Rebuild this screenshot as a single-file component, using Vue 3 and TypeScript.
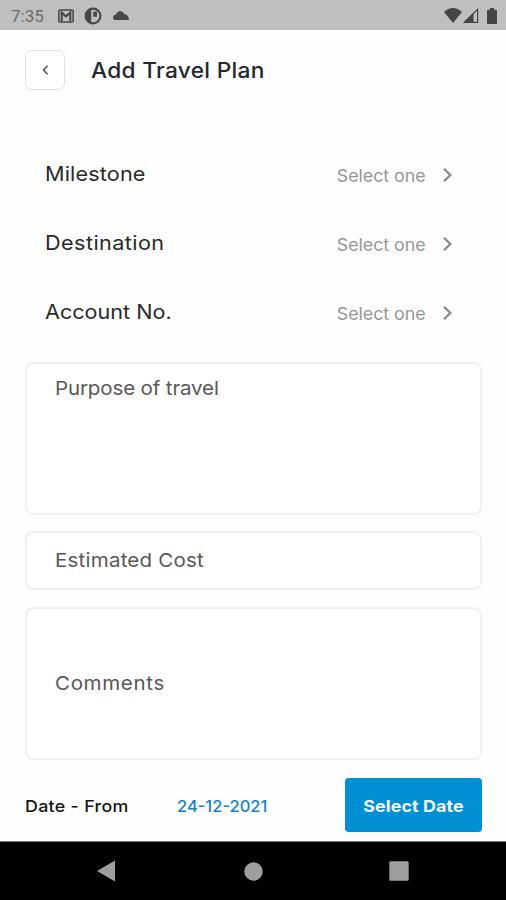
<script setup lang="ts">
interface SelectRow {
  key: string
  label: string
}

const rows: SelectRow[] = [
  { key: 'milestone', label: 'Milestone' },
  { key: 'destination', label: 'Destination' },
  { key: 'account', label: 'Account No.' },
]
</script>

<template>
  <div class="screen">
    <header class="status">
      <span class="clock">7:35</span>
      <svg class="mail" width="16" height="14" viewBox="0 0 16 14">
        <rect x="0.9" y="0.9" width="14.2" height="12" rx="1" fill="none" stroke="#474747" stroke-width="1.5" />
        <path d="M3.7 12V3.6L8 7.3l4.3-3.7V12" fill="none" stroke="#474747" stroke-width="2.1" />
      </svg>
      <svg class="disc" width="18" height="18" viewBox="0 0 18 18">
        <circle cx="9" cy="9" r="7.4" fill="none" stroke="#474747" stroke-width="2.1" />
        <path d="M2 6Q4 2 7.2 1.5V16.5Q3.5 15.5 2 11z" fill="#474747" />
        <path d="M9.2 4.6H13V9.8H9.2z" fill="#474747" />
      </svg>
      <svg class="cloud" width="17" height="10" viewBox="0 0 17 10">
        <path d="M2.6 10A2.7 2.7 0 0 1 2.7 5Q4.1 4.7 4.7 2.9A4.3 4.3 0 0 1 12.1 4Q16.6 4.6 17 10z" fill="#474747" />
      </svg>
      <div class="signals">
        <svg width="18" height="15" viewBox="0 0 18 15">
          <path d="M9 15L0 4Q9-3.8 18 4z" fill="#454545" />
        </svg>
        <svg class="cell" width="16" height="15" viewBox="0 0 16 15">
          <path d="M1.6 14.3L14.6 1.4V14.3z" fill="none" stroke="#454545" stroke-width="1.2" />
          <path d="M0 15L10.5 4.5V15z" fill="#454545" />
        </svg>
        <svg class="battery" width="10" height="16" viewBox="0 0 10 16">
          <path d="M3 0h4v1.7h2q1 0 1 1V15q0 1-1 1H1q-1 0-1-1V2.7q0-1 1-1h2z" fill="#454545" />
        </svg>
      </div>
    </header>

    <main class="content">
      <div class="heading">
        <button class="back" type="button" aria-label="Back">
          <svg width="8" height="12" viewBox="0 0 8 12">
            <path d="M6.7 1.8L2.4 6l4.3 4.2" fill="none" stroke="#4c4c4c" stroke-width="1.4" />
          </svg>
        </button>
        <h1 class="title">Add Travel Plan</h1>
      </div>

      <div class="rows">
        <div v-for="row in rows" :key="row.key" class="row">
          <span class="label" :class="row.key">{{ row.label }}</span>
          <span class="choice">Select one</span>
          <svg class="chevron" width="11" height="16" viewBox="0 0 11 16">
            <path d="M2 1.8L8.3 8L2 14.2" fill="none" stroke="#8a8a8a" stroke-width="2.3" />
          </svg>
        </div>
      </div>

      <div class="field purpose"><span>Purpose of travel</span></div>
      <div class="field cost"><span>Estimated Cost</span></div>
      <div class="field comments"><span>Comments</span></div>

      <div class="dates">
        <span class="from">Date - From</span>
        <span class="date">24-12-2021</span>
        <button class="select" type="button"><span>Select Date</span></button>
      </div>
    </main>

    <nav class="navbar">
      <svg width="18" height="22" viewBox="0 0 18 22"><path d="M0 11L18 0.5v21z" fill="#9e9e9e" /></svg>
      <svg class="home" width="19" height="19" viewBox="0 0 19 19"><circle cx="9.5" cy="9.5" r="9.2" fill="#9e9e9e" /></svg>
      <svg width="20" height="20" viewBox="0 0 20 20"><rect x="0.3" y="0.3" width="19.4" height="19.4" rx="1.5" fill="#9e9e9e" /></svg>
    </nav>
  </div>
</template>

<style>
body {
  background: #fff;
}
</style>

<style scoped>
.screen {
  box-sizing: border-box;
  width: 506px;
  height: 900px;
  display: flex;
  flex-direction: column;
  background: #fefefe;
  font-family: Inter, "Liberation Sans", sans-serif;
  overflow: hidden;
}
.screen * {
  box-sizing: border-box;
}
svg {
  display: block;
  flex: none;
}
span {
  white-space: nowrap;
}
/* Widens the letterforms of the interface face */
.title,
.label,
.field span,
.from {
  transform: scaleX(1.08);
  transform-origin: left center;
}
.status {
  flex: none;
  height: 30px;
  display: flex;
  align-items: center;
  padding: 1px 8px 0 11px;
  background: #bfbfbf;
}
.clock {
  width: 47px;
  font: 400 17px/20px Roboto, sans-serif;
  color: #6c6c6c;
}
.disc {
  margin-left: 10px;
}
.cloud {
  margin-left: 10px;
  margin-top: -2px;
}
.signals {
  margin-left: auto;
  display: flex;
  align-items: center;
}
.signals > svg:first-child {
  margin-left: -1px;
}
.cell {
  margin-left: 1px;
}
.battery {
  margin-left: 8px;
  margin-right: 1px;
}
.content {
  flex: none;
  height: 811px;
  padding: 20px 24px 0 25px;
  display: flex;
  flex-direction: column;
}
.heading {
  display: flex;
  align-items: center;
  height: 40px;
}
.back {
  width: 40px;
  height: 40px;
  padding: 0;
  display: flex;
  align-items: center;
  justify-content: center;
  border: 1px solid #e0e0e4;
  border-radius: 7px;
  background: #fff;
}
.title {
  margin: 0 0 0 26px;
  padding-top: 1px;
  font-size: 21px;
  line-height: 28px;
  font-weight: 500;
  letter-spacing: 0.28px;
  color: #232830;
}
.rows {
  margin-top: 50px;
}
.row {
  height: 69px;
  display: flex;
  align-items: center;
  padding: 0 29px 0 20px;
}
.label {
  padding-bottom: 1px;
  font-size: 20px;
  line-height: 26px;
  color: #292929;
}
.milestone {
  letter-spacing: 0.15px;
}
.destination {
  letter-spacing: 0.4px;
}
.choice {
  margin-left: auto;
  padding-top: 2px;
  font-size: 17px;
  letter-spacing: -0.05px;
  color: #969696;
  transform: scaleX(1.05);
  transform-origin: right center;
}
.chevron {
  margin-left: 16px;
}
.field {
  flex: none;
  display: flex;
  align-items: center;
  padding-left: 28px;
  border: 2px solid #f0f0f6;
  border-radius: 8px;
  background: #fff;
  font-size: 19px;
  line-height: 24px;
  color: #585858;
}
.purpose {
  height: 153px;
  margin-top: 15px;
  align-items: flex-start;
  padding-top: 13px;
  letter-spacing: -0.13px;
}
.cost {
  height: 59px;
  margin-top: 16px;
  letter-spacing: 0.2px;
}
.comments {
  height: 153px;
  margin-top: 17px;
  letter-spacing: 0.6px;
}
.dates {
  margin-top: 18px;
  height: 54px;
  display: flex;
  align-items: center;
  font-size: 16.5px;
}
.from {
  width: 152px;
  font-weight: 500;
  letter-spacing: 0.28px;
  color: #151515;
}
.date {
  font-weight: 500;
  color: #1682ca;
}
.from,
.date {
  padding-top: 2px;
}
.select {
  margin-left: auto;
  width: 137px;
  height: 54px;
  padding: 2px 0 0;
  border: 0;
  border-radius: 4px;
  background: #008fd3;
  color: #f4faff;
  font: 700 16.5px/22px Inter, sans-serif;
}
.select span {
  display: inline-block;
  letter-spacing: 0.1px;
  transform: scaleX(1.08);
}
.navbar {
  flex: 1;
  display: flex;
  align-items: center;
  justify-content: space-between;
  padding: 0 97px 0 97px;
  border-top: 1px solid #777;
  background: #000;
}
.home {
  margin-left: 2px;
}
</style>
